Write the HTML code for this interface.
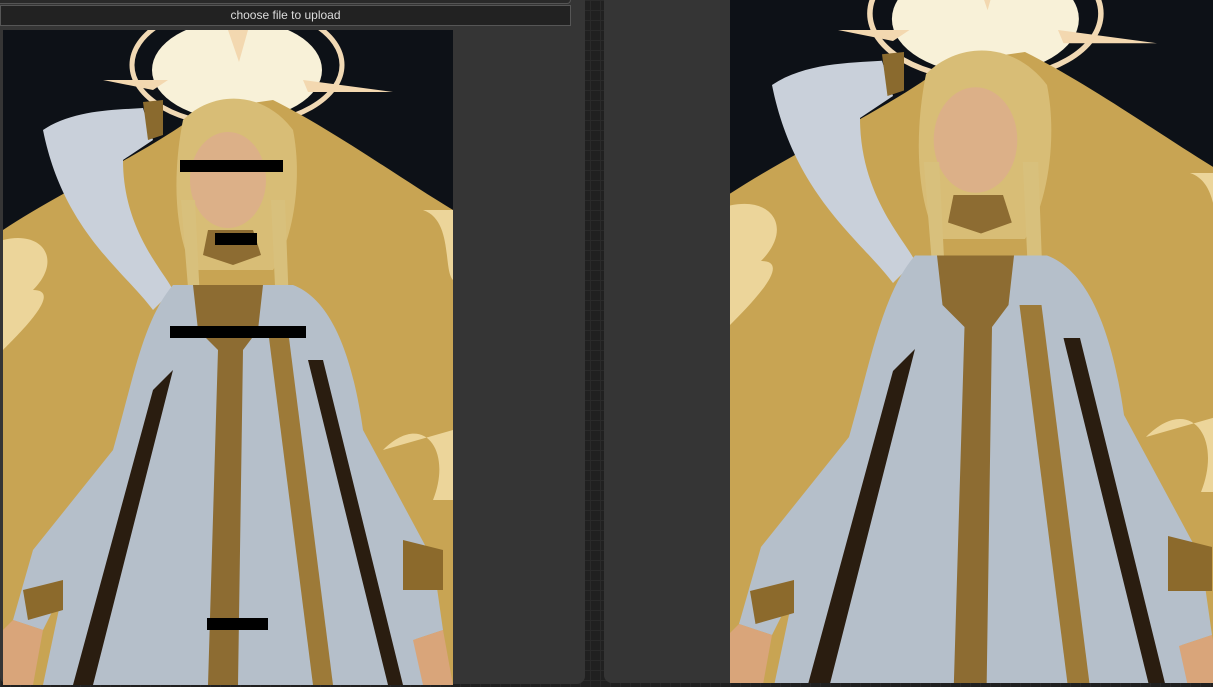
<!DOCTYPE html>
<html><head><style>
html,body{margin:0;padding:0;width:1213px;height:687px;overflow:hidden;background:#1e1e1e;font-family:"Liberation Sans",sans-serif;position:relative}
.grid{position:absolute;left:0;top:0;width:1213px;height:687px;background-color:#202020;background-image:linear-gradient(#2a2a2a 1px,transparent 1px),linear-gradient(90deg,#2a2a2a 1px,transparent 1px);background-size:10px 10px}
.node{position:absolute;background:#353535;border-radius:0 0 8px 8px}
.btn{position:absolute;left:0;top:5px;width:569px;height:19px;background:#222;border:1px solid #565656;color:#ddd;font-size:12px;text-align:center;line-height:19px}
.wrap{position:absolute;overflow:hidden}
svg{display:block}
</style></head><body>
<div class="grid"></div>
<div class="node" style="left:0;top:0;width:585px;height:684px"></div>
<div style="position:absolute;left:0;top:0;width:570px;height:3px;border-bottom:1px solid #555;border-right:1px solid #555;border-radius:0 0 4px 0;background:#2a2a2a"></div>
<div class="btn">choose file to upload</div>
<div class="node" style="left:604px;top:0;width:609px;height:683px;border-radius:0 0 0 8px"></div>

<svg width="0" height="0" style="position:absolute;left:0;top:0">
<defs>
<g id="fig">
<rect x="-50" y="-50" width="600" height="760" fill="#0d1117"/>
<ellipse cx="234" cy="35" rx="105" ry="60" fill="none" stroke="#f1d9b4" stroke-width="5"/>
<ellipse cx="234" cy="40" rx="85" ry="50" fill="#f8f1d8"/>
<path d="M100 50 L165 50 L150 60Z M300 50 L390 62 L305 62Z M225 0 L245 0 L236 32Z" fill="#f3d8b0"/>
<path d="M0 200 C60 160 150 120 200 80 L270 70 C330 100 400 150 450 180 L450 655 L0 655Z" fill="#c8a453"/>
<path d="M0 210 C40 200 60 230 30 260 C60 260 20 300 0 320Z M420 180 C450 190 440 240 450 250 L450 180Z M380 420 C420 380 450 420 430 470 L450 470 L450 400Z" fill="#ecd59a"/>
<path d="M180 90 C210 60 260 60 290 100 C300 150 290 210 270 240 L190 240 C170 200 170 140 180 90Z" fill="#d8bd76"/>
<ellipse cx="225" cy="150" rx="38" ry="48" fill="#dcb088"/>
<path d="M178 170 L190 320 L200 330 L192 170Z M268 170 L275 320 L288 330 L282 170Z" fill="#d8c07c"/>
<path d="M40 100 C70 80 110 80 140 78 L150 110 L120 130 C120 200 160 240 170 260 L150 280 C120 240 60 200 40 100Z" fill="#c9d0da"/>
<path d="M140 72 L160 70 L160 105 L145 110Z" fill="#8a6a2e"/>
<path d="M170 255 L290 255 C330 270 350 330 360 400 L430 530 L440 600 L410 610 L395 560 L430 655 L40 655 L60 560 L40 600 L10 590 L30 520 L110 420 C130 350 140 290 170 255Z" fill="#b5bfca"/>
<path d="M10 590 L40 600 L30 655 L0 655 L0 600Z M410 610 L440 600 L450 655 L420 655Z" fill="#d9a57a"/>
<path d="M20 560 L60 550 L60 580 L25 590Z M400 510 L440 520 L440 560 L400 560Z" fill="#8c6a2c"/>
<path d="M190 255 L260 255 L255 300 L240 320 L235 655 L205 655 L215 320 L195 300Z" fill="#8d6c32"/>
<path d="M265 300 L285 300 L330 655 L310 655Z" fill="#9d7a38"/>
<path d="M150 360 L170 340 L90 655 L70 655Z M305 330 L320 330 L400 655 L385 655Z" fill="#2a1d10"/>
<path d="M205 200 L250 200 L258 225 L230 235 L200 225Z" fill="#8d6c32"/>
</g>
</defs>
</svg>

<div class="wrap" style="left:3px;top:30px;width:450px;height:655px">
<svg width="450" height="655" viewBox="0 0 450 655">
<use href="#fig"/>
<rect x="177" y="130" width="103" height="12" fill="#000"/>
<rect x="212" y="203" width="42" height="12" fill="#000"/>
<rect x="167" y="296" width="136" height="12" fill="#000"/>
<rect x="204" y="588" width="61" height="12" fill="#000"/>
</svg>
</div>
<div class="wrap" style="left:730px;top:0;width:483px;height:683px">
<svg width="483" height="683" viewBox="0 0 483 683">
<g transform="translate(-2,-25) scale(1.1)"><use href="#fig"/></g>
</svg>
</div>
</body></html>
